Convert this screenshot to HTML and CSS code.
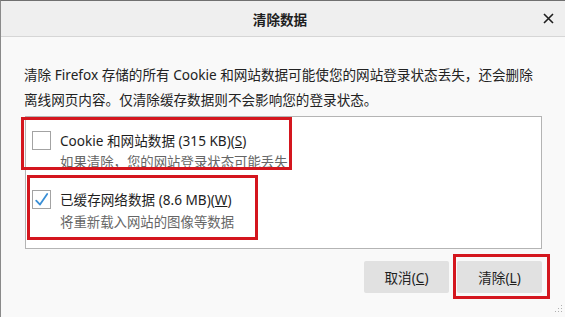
FILE: index.html
```html
<!DOCTYPE html>
<html lang="zh-CN">
<head>
<meta charset="utf-8">
<title>清除数据</title>
<link rel="stylesheet" href="styles.css">
</head>
<body>
<div class="dialog">
  <div class="titlebar">
    <div class="title">清除数据</div>
    <div class="close">
      <svg width="11" height="11" viewBox="0 0 11 11"><path d="M1 1 L10 10 M10 1 L1 10" stroke="#1e1e1e" stroke-width="1.6" fill="none"/></svg>
    </div>
  </div>
  <div class="content">
    <p class="desc">清除 Firefox 存储的所有 Cookie 和网站数据可能使您的网站登录状态丢失，还会删除<br>离线网页内容。仅清除缓存数据则不会影响您的登录状态。</p>
    <div class="list">
      <div class="item item-first">
        <span class="checkbox"></span>
        <div class="texts">
          <div class="label">Cookie 和网站数据 (315 KB)(<u>S</u>)</div>
          <div class="sub">如果清除，您的网站登录状态可能丢失</div>
        </div>
      </div>
      <div class="item item-second">
        <span class="checkbox">
          <svg width="17" height="17" viewBox="0 0 17 17"><path d="M3.2 9.6 L7 13.6 L14.2 3" stroke="#3a8fd6" stroke-width="1.8" fill="none" stroke-linecap="round" stroke-linejoin="round"/></svg>
        </span>
        <div class="texts">
          <div class="label">已缓存网络数据 (8.6 MB)(<u>W</u>)</div>
          <div class="sub">将重新载入网站的图像等数据</div>
        </div>
      </div>
      <div class="mark mark-one"></div>
      <div class="mark mark-two"></div>
    </div>
    <div class="buttons">
      <button class="btn">取消(<u>C</u>)</button>
      <div class="btn-wrap">
        <button class="btn">清除(<u>L</u>)</button>
        <div class="mark mark-three"></div>
      </div>
    </div>
  </div>
  <svg class="grip" width="8" height="8" viewBox="0 0 8 8">
    <rect x="6" y="0" width="1" height="1" fill="#b0b0b0"/>
    <rect x="3" y="3" width="1" height="1" fill="#b0b0b0"/>
    <rect x="6" y="3" width="1" height="1" fill="#b0b0b0"/>
    <rect x="0" y="6" width="1" height="1" fill="#b0b0b0"/>
    <rect x="3" y="6" width="1" height="1" fill="#b0b0b0"/>
    <rect x="6" y="6" width="1" height="1" fill="#b0b0b0"/>
  </svg>
</div>
</body>
</html>
```

FILE: styles.css
```css
html, body {
  margin: 0;
  padding: 0;
  background: #f9f9f9;
}
.dialog {
  position: relative;
  width: 565px;
  height: 317px;
  box-sizing: border-box;
  border-top: 1px solid #707070;
  border-left: 1px solid #8a8a8a;
  background: #f9f9f9;
  font-family: "Noto Sans", "Noto Sans CJK SC", sans-serif;
  color: #222;
  overflow: hidden;
}
.titlebar {
  height: 35px;
  background: #efefef;
  border-bottom: 1px solid #d6d6d6;
  display: flex;
  align-items: center;
  justify-content: center;
  position: relative;
}
.title {
  font-size: 13.6px;
  font-weight: bold;
  color: #1e1e1e;
  margin-right: 6px;
}
.close {
  position: absolute;
  right: 11px;
  top: 12px;
  width: 11px;
  height: 11px;
  display: flex;
}
.content {
  padding: 0 0 0 23px;
}
.desc {
  margin: 25px 0 0 0;
  font-size: 13.6px;
  line-height: 25px;
  color: #222;
}
.list {
  position: relative;
  margin: 4px 0 0 1px;
  width: 517px;
  height: 133px;
  box-sizing: border-box;
  background: #fff;
  border: 1px solid #b4b4b4;
}
.item {
  display: flex;
  align-items: flex-start;
  padding-left: 6px;
}
.item-first {
  padding-top: 14px;
}
.item-second {
  padding-top: 17px;
}
.checkbox {
  width: 19px;
  height: 19px;
  box-sizing: border-box;
  border: 1px solid #a3a3a3;
  background: #fff;
  display: flex;
  align-items: center;
  justify-content: center;
  flex: none;
}
.texts {
  margin-left: 9px;
}
.label {
  font-size: 13.6px;
  line-height: 20px;
  color: #1e1e1e;
}
.sub {
  font-size: 13.4px;
  line-height: 22px;
  color: #666;
}
.item-second .sub {
  margin-top: 1px;
}
.mark {
  position: absolute;
  box-sizing: border-box;
  border: 3px solid #d4161e;
  pointer-events: none;
}
.mark-one {
  left: -5px;
  top: 0;
  width: 271px;
  height: 53px;
}
.mark-two {
  left: 1px;
  top: 58px;
  width: 231px;
  height: 65px;
}
.buttons {
  display: flex;
  justify-content: flex-end;
  gap: 8px;
  width: 518px;
  margin-top: 12px;
}
.btn {
  width: 85px;
  height: 32px;
  border: none;
  border-radius: 2px;
  background: #e1e1e1;
  font-family: "Noto Sans", "Noto Sans CJK SC", sans-serif;
  font-size: 13.6px;
  color: #1e1e1e;
  padding: 0;
}
.btn-wrap {
  position: relative;
  display: flex;
}
.mark-three {
  left: -4px;
  top: -7px;
  width: 97px;
  height: 45px;
}
.grip {
  position: absolute;
  right: 2px;
  bottom: 4px;
}
```
